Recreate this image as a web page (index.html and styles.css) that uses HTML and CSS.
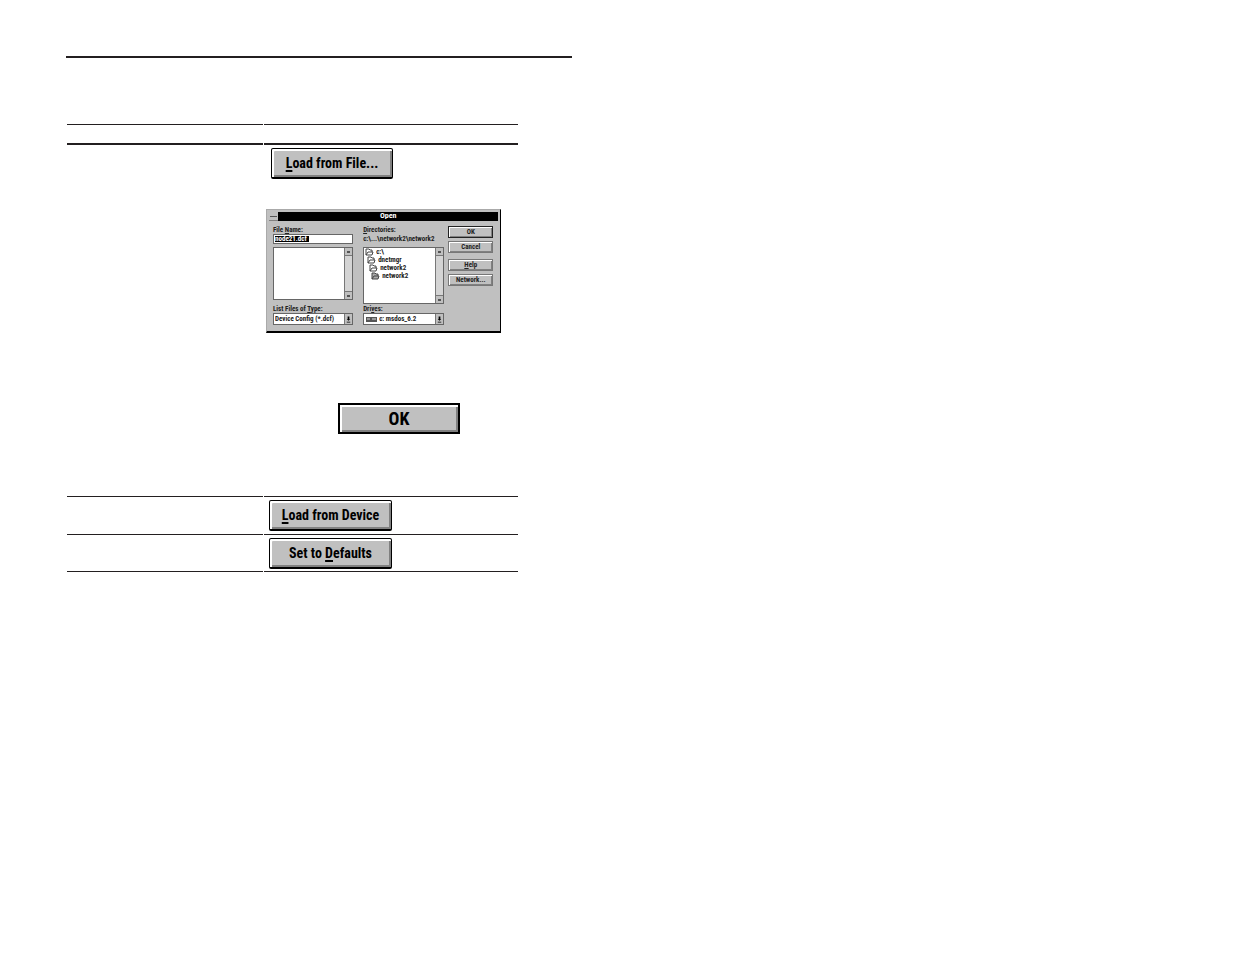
FILE: index.html
```html
<!DOCTYPE html>
<html lang="en">

<head>
    <meta charset="UTF-8">
    <meta name="viewport" content="width=device-width, initial-scale=1.0">
    <title>Load from File</title>
    <link rel="stylesheet" href="styles.css">
</head>

<body>
    <main class="sheet">
        <hr class="rule">
        <table class="steps">
            <thead>
                <tr>
                    <th class="first"></th>
                    <th></th>
                </tr>
            </thead>
            <tbody>
                <tr class="tall">
                    <td></td>
                    <td>
                        <button type="button" class="btn btn-file"><span><u>L</u>oad from File...</span></button>

                        <form class="dialog">
                            <div class="title-bar">
                                <span class="menu-box"></span>
                                <span class="title">Open</span>
                            </div>
                            <div class="dialog-body">
                                <div class="col">
                                    <label for="file_name">File <u>N</u>ame:</label>
                                    <div class="name-box"><input type="text" id="file_name" value="node21.dcf"></div>
                                    <div class="list files">
                                        <ul></ul>
                                        <div class="scroll"><i></i><i class="down"></i></div>
                                    </div>
                                    <label for="file_type">List Files of <u>T</u>ype:</label>
                                    <div class="drop">
                                        <select id="file_type"><option>Device Config (*.dcf)</option></select>
                                        <svg viewBox="0 0 8 10"><path d="M3 2h2v3h1L4 7 2 5h1zM2 8h4v1H2z"/></svg>
                                    </div>
                                </div>
                                <div class="col">
                                    <span class="label"><u>D</u>irectories:</span>
                                    <span class="path">c:\...\network2\network2</span>
                                    <div class="list dirs">
                                        <ul>
                                            <li><svg viewBox="0 0 9 8"><path d="M1 7V1h3l1 1h2v2M1 7l2-3h5L7 7z"/></svg>c:\</li>
                                            <li class="in1"><svg viewBox="0 0 9 8"><path d="M1 7V1h3l1 1h2v2M1 7l2-3h5L7 7z"/></svg>dnetmgr</li>
                                            <li class="in2"><svg viewBox="0 0 9 8"><path d="M1 7V1h3l1 1h2v2M1 7l2-3h5L7 7z"/></svg>network2</li>
                                            <li class="in3 current"><svg viewBox="0 0 9 8"><path d="M1 7V1h3l1 1h2v2M1 7l2-3h5L7 7z"/></svg>network2</li>
                                        </ul>
                                        <div class="scroll"><i></i><i class="down"></i></div>
                                    </div>
                                    <label for="drive">Dri<u>v</u>es:</label>
                                    <div class="drop">
                                        <svg class="disk" viewBox="0 0 12 10"><path d="M1 3h11v5H1z"/><path class="slot" d="M2 5h3M7 5h4"/></svg>
                                        <select id="drive"><option>c: msdos_6.2</option></select>
                                        <svg viewBox="0 0 8 10"><path d="M3 2h2v3h1L4 7 2 5h1zM2 8h4v1H2z"/></svg>
                                    </div>
                                </div>
                                <div class="actions">
                                    <button type="button" class="default">OK</button>
                                    <button type="button">Cancel</button>
                                    <button type="button" class="apart"><u>H</u>elp</button>
                                    <button type="button">Network...</button>
                                </div>
                            </div>
                        </form>

                        <button type="button" class="btn btn-ok">OK</button>
                    </td>
                </tr>
                <tr>
                    <td></td>
                    <td><button type="button" class="btn"><span><u>L</u>oad from Device</span></button></td>
                </tr>
                <tr class="last">
                    <td></td>
                    <td><button type="button" class="btn"><span>Set to <u>D</u>efaults</span></button></td>
                </tr>
            </tbody>
        </table>
    </main>
</body>

</html>
```
FILE: styles.css
```css
* {
    margin: 0;
    padding: 0;
    box-sizing: border-box;
}

body {
    background: #fff;
    color: #000;
    font-family: "Roboto Condensed", "Liberation Sans Narrow", "Liberation Sans", sans-serif;
}

.sheet {
    width: 41%;
    margin: 56px 0 0 66px;
}

.rule {
    border: 0;
    height: 2px;
    background: #231f20;
    margin-bottom: 66px;
}

/* table */
.steps {
    width: calc(100% - 53px);
    table-layout: fixed;
    border-collapse: separate;
    border-spacing: 1px 0;
}

.steps th {
    height: 21px;
    border-top: 1px solid #231f20;
    border-bottom: 2px solid #231f20;
}

.steps .first {
    width: 196px;
}

.steps td {
    height: 38px;
    padding: 3px 5px;
    border-bottom: 1px solid #231f20;
    vertical-align: top;
}

.steps .tall td {
    height: 352px;
    padding: 3px 2px;
}

.steps .last td {
    height: 37px;
    padding-bottom: 2px;
}

.btn {
    display: block;
    width: 123px;
    height: 31px;
    border: 1px solid #000;
    border-bottom-width: 2px;
    border-radius: 2px;
    background: #c0c0c0;
    box-shadow: inset 2px 2px #fff, inset -2px -2px #808080;
    font-family: inherit;
    font-size: 14px;
    font-weight: bold;
}

.btn u {
    text-decoration-thickness: 2px;
    text-underline-offset: 2px;
}

.btn-file {
    width: 122px;
    margin-left: 5px;
}

.btn-ok {
    width: 122px;
    margin: 70px 0 0 72px;
    border-width: 2px;
    border-radius: 0;
    font-size: 18px;
}

/* open dialog */
.dialog {
    width: 94%;
    margin-top: 30px;
    padding: 2px;
    border: 1px solid #aaa;
    border-right-color: #000;
    border-bottom: 2px solid #000;
    background: #c0c0c0;
    color: #222;
    font-size: 7px;
    font-weight: bold;
    line-height: 8px;
}

.title-bar {
    display: flex;
    height: 9px;
}

.menu-box {
    width: 9px;
    border-bottom: 1px solid #808080;
    background: linear-gradient(#555, #555) center / 7px 1px no-repeat;
}

.title {
    flex: 1;
    background: #000;
    color: #fff;
    font-size: 8px;
    text-align: center;
}

.dialog-body {
    display: grid;
    grid-template-columns: 80fr 81fr 39fr;
    column-gap: 10px;
    padding: 5px 5px 4px 4px;
}

.dialog label,
.dialog .label,
.path {
    display: block;
    height: 8px;
    white-space: nowrap;
}

.path {
    height: 10px;
    margin-bottom: 3px;
    line-height: 10px;
}

.name-box {
    height: 10px;
    margin-bottom: 3px;
    padding: 1px;
    border: 1px solid #666;
    background: #fff;
}

.dialog input,
.dialog select {
    display: block;
    border: 0;
    outline: 0;
    appearance: none;
    background: #fff;
    color: #222;
    font: inherit;
}

.dialog .name-box input {
    width: 34px;
    height: 6px;
    line-height: 6px;
    background: #000;
    color: #fff;
}

.list {
    display: flex;
    border: 1px solid #666;
    background: #fff;
}

.files {
    height: 53px;
    margin-bottom: 5px;
}

.dirs {
    height: 57px;
    margin-bottom: 1px;
}

.list ul {
    flex: 1;
    list-style: none;
}

.list li {
    display: flex;
    gap: 2px;
    padding-left: 1px;
}

.list .in1 {
    padding-left: 3px;
}

.list .in2 {
    padding-left: 5px;
}

.list .in3 {
    padding-left: 7px;
}

.list svg {
    width: 9px;
    height: 8px;
    fill: none;
    stroke: #444;
}

.list .current svg {
    fill: #aaa;
}

.scroll {
    display: flex;
    flex-direction: column;
    justify-content: space-between;
    width: 8px;
    border-left: 1px solid #777;
    background: #d4d4d4;
}

.scroll i {
    height: 8px;
    border-bottom: 1px solid #777;
    background: linear-gradient(#555, #555) center / 3px 2px no-repeat #c0c0c0;
}

.scroll .down {
    border-top: 1px solid #777;
    border-bottom: 0;
}

.drop {
    display: flex;
    height: 12px;
    border: 1px solid #666;
    background: #fff;
}

.drop select {
    flex: 1;
    min-width: 0;
    padding-left: 1px;
}

.drop svg {
    width: 8px;
    height: 10px;
    border-left: 1px solid #777;
    background: #c0c0c0;
}

.drop .disk {
    width: 14px;
    border: 0;
    background: #fff;
    fill: #555;
}

.slot {
    stroke: #ddd;
}

.actions {
    display: flex;
    flex-direction: column;
    gap: 3px;
    margin-left: -6px;
}

.actions button {
    height: 12px;
    border: 1px solid #777;
    background: #c0c0c0;
    box-shadow: inset 1px 1px #fff, inset -1px -1px #808080;
    color: #222;
    font: inherit;
}

.actions .default {
    border-color: #222;
}

.actions .apart {
    margin-top: 3px;
}
```
